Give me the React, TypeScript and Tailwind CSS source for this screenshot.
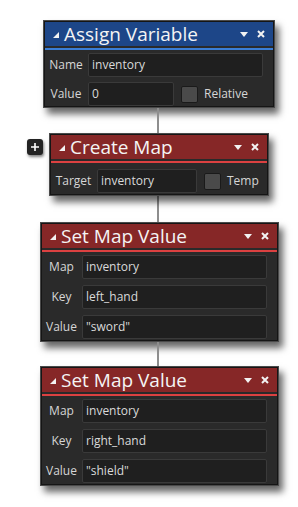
import type { ReactNode } from "react";

type Theme = "blue" | "red";

const titleBg: Record<Theme, string> = {
  blue: "bg-[#1d4688]",
  red: "bg-[#862727]",
};

const lineBg: Record<Theme, string> = {
  blue: "bg-[#3b7ed6]",
  red: "bg-[#dc4141]",
};

const Header = ({ title, theme }: { title: string; theme: Theme }) => (
  <>
    <div className={`flex h-[24px] items-center pl-[8px] pr-[8px] ${titleBg[theme]}`}>
      <svg width="6" height="6" viewBox="0 0 6 6" className="mt-[2px]">
        <polygon points="6,0 6,6 0,6" fill="#f2f2f2" />
      </svg>
      <span className="ml-[5px] flex-1 text-[19px] leading-[24px] text-[#f4f4f4]">{title}</span>
      <svg width="8" height="5" viewBox="0 0 8 5">
        <polygon points="0,0 8,0 4,5" fill="#f2f2f2" />
      </svg>
      <svg width="8" height="8" viewBox="0 0 8 8" className="ml-[9px]">
        <path d="M1 1 L7 7 M7 1 L1 7" stroke="#f2f2f2" strokeWidth="2" />
      </svg>
    </div>
    <div className={`mt-[2px] h-[2px] ${lineBg[theme]}`} />
  </>
);

const Panel = ({
  title,
  theme,
  width,
  children,
}: {
  title: string;
  theme: Theme;
  width: string;
  children: ReactNode;
}) => (
  <div className={`${width} border border-[#4a4a4a] shadow-[4px_6px_7px_rgba(0,0,0,0.6)]`}>
    <div className="border border-[#151515] bg-[#2a2a2a]">
      <Header title={title} theme={theme} />
      {children}
    </div>
  </div>
);

const Field = ({ value, className = "flex-1" }: { value: string; className?: string }) => (
  <div
    className={`${className} h-[24px] rounded-[2px] border border-[#3a3a3a] bg-[#1f1f1f] pl-[3px] text-[12px] leading-[22px] text-[#dadada]`}
  >
    {value}
  </div>
);

const Check = ({ label }: { label: string }) => (
  <>
    <div className="ml-[7px] h-[17px] w-[17px] rounded-[2px] border border-[#1a1a1a] bg-[#4a4a4a]" />
    <span className="ml-[6px] text-[12px] text-[#d6d6d6]">{label}</span>
  </>
);

const Label = ({ text, width }: { text: string; width: string }) => (
  <span className={`${width} shrink-0 text-center text-[12px] text-[#d6d6d6]`}>{text}</span>
);

const Connector = ({ height }: { height: string }) => (
  <div className={`ml-[157px] w-[2px] ${height} bg-[#8e8e8e]`} />
);

const MapValue = ({ keyName, value }: { keyName: string; value: string }) => (
  <Panel title="Set Map Value" theme="red" width="w-[239px]">
    <div className="flex flex-col gap-[6px] pl-[2px] pr-[10px] pt-[3px] pb-[1px]">
      <div className="flex items-center gap-[3px]">
        <Label text="Map" width="w-[35px]" />
        <Field value="inventory" />
      </div>
      <div className="flex items-center gap-[3px]">
        <Label text="Key" width="w-[35px]" />
        <Field value={keyName} />
      </div>
      <div className="flex items-center gap-[3px]">
        <Label text="Value" width="w-[35px]" />
        <Field value={value} />
      </div>
    </div>
  </Panel>
);

export default function App() {
  return (
    <div
      className="h-[507px] w-[298px] overflow-hidden bg-white pt-[20px]"
      style={{ fontFamily: '"Open Sans", "Noto Sans", sans-serif' }}
    >
      {/* Assign Variable */}
      <div className="ml-[43px]">
        <Panel title="Assign Variable" theme="blue" width="w-[232px]">
          <div className="flex flex-col gap-[5px] pl-[2px] pr-[10px] pt-[3px]">
            <div className="flex items-center gap-[3px]">
              <Label text="Name" width="w-[38px]" />
              <Field value="inventory" />
            </div>
            <div className="flex items-center">
              <Label text="Value" width="w-[38px]" />
              <Field value="0" className="ml-[3px] w-[86px]" />
              <Check label="Relative" />
            </div>
          </div>
        </Panel>
      </div>

      <Connector height="h-[25px]" />

      {/* Create Map */}
      <div className="ml-[27px] flex items-start">
        <button className="mt-[6px] flex h-[16px] w-[16px] items-center justify-center rounded-[3px] bg-[#232323] shadow-[1px_2px_3px_rgba(0,0,0,0.5)]">
          <svg width="8" height="8" viewBox="0 0 8 8">
            <path d="M4 0 V8 M0 4 H8" stroke="#ffffff" strokeWidth="1.6" />
          </svg>
        </button>
        <div className="ml-[6px]">
          <Panel title="Create Map" theme="red" width="w-[220px]">
            <div className="flex items-center pl-[2px] pt-[6px] pb-[1px]">
              <Label text="Target" width="w-[41px]" />
              <Field value="inventory" className="ml-[3px] w-[100px]" />
              <Check label="Temp" />
            </div>
          </Panel>
        </div>
      </div>

      <Connector height="h-[26px]" />

      <div className="ml-[40px]">
        <MapValue keyName="left_hand" value={'"sword"'} />
      </div>

      <Connector height="h-[24px]" />

      <div className="ml-[40px]">
        <MapValue keyName="right_hand" value={'"shield"'} />
      </div>
    </div>
  );
}
